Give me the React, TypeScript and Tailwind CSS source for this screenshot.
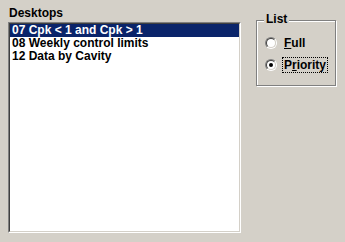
import React, { useState } from 'react';

const desktops = ['07 Cpk < 1 and Cpk > 1', '08 Weekly control limits', '12 Data by Cavity'];

const Radio = ({ checked }: { checked: boolean }) => (
  <div className="w-[12px] h-[12px] rounded-full border border-t-[#808080] border-l-[#808080] border-b-white border-r-white">
    <div className="w-full h-full rounded-full border border-t-[#404040] border-l-[#404040] border-b-[#d4d0c8] border-r-[#d4d0c8] bg-white flex items-center justify-center">
      {checked && <div className="w-[4px] h-[4px] rounded-full bg-black" />}
    </div>
  </div>
);

const App = () => {
  const [selected, setSelected] = useState(0);
  const [mode, setMode] = useState<'full' | 'priority'>('priority');

  return (
    <div
      className="w-[345px] h-[242px] bg-[#d4d0c8] flex pl-[8px] text-[12px] font-bold text-black"
      style={{ fontFamily: '"Liberation Sans", Arial, sans-serif' }}
    >
      <div className="flex flex-col pt-[6px]">
        <div className="h-[14px] leading-[14px] pl-[1px]">Desktops</div>
        <div className="mt-[2px] w-[233px] h-[211px] border border-t-[#808080] border-l-[#808080] border-b-white border-r-white">
          <div className="w-full h-full border border-t-[#404040] border-l-[#404040] border-b-[#d4d0c8] border-r-[#d4d0c8] bg-white">
            {desktops.map((d, i) => (
              <div
                key={d}
                onClick={() => setSelected(i)}
                className={`h-[13px] leading-[13px] px-[2px] whitespace-nowrap ${
                  i === selected ? 'bg-[#0a246a] text-white' : ''
                }`}
              >
                {d}
              </div>
            ))}
          </div>
        </div>
      </div>

      <div className="ml-[15px] mt-[20px]">
        <div className="relative w-[80px] h-[66px] border border-[#808080] shadow-[inset_1px_1px_0_#fff,1px_1px_0_#fff] pt-[14px] pl-[8px] flex flex-col gap-[6px]">
          <div className="absolute left-[7px] -top-[8px] px-[2px] bg-[#d4d0c8] leading-[13px]">List</div>
          <div className="h-[16px] flex items-center gap-[5px]" onClick={() => setMode('full')}>
            <Radio checked={mode === 'full'} />
            <span className={`px-[1px] leading-[14px] border border-dotted ${mode === 'full' ? 'border-black' : 'border-transparent'}`}>
              <span className="underline">F</span>ull
            </span>
          </div>
          <div className="h-[16px] flex items-center gap-[5px]" onClick={() => setMode('priority')}>
            <Radio checked={mode === 'priority'} />
            <span className={`px-[1px] leading-[14px] border border-dotted ${mode === 'priority' ? 'border-black' : 'border-transparent'}`}>
              P<span className="underline">r</span>iority
            </span>
          </div>
        </div>
      </div>
    </div>
  );
};

export default App;
